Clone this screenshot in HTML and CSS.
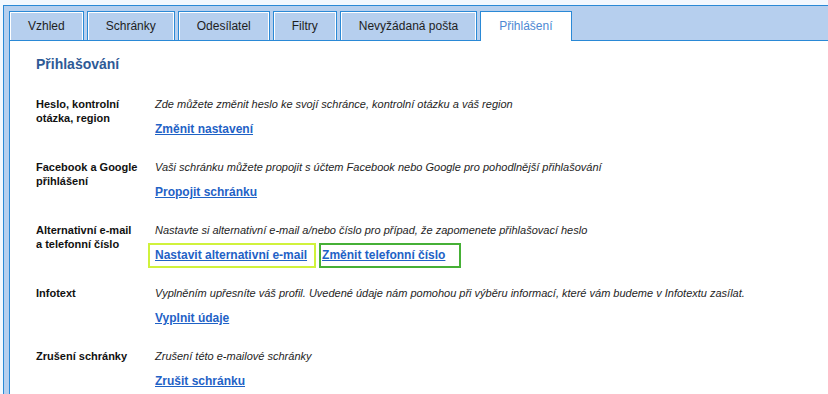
FILE: index.html
```html
<!DOCTYPE html>
<html lang="cs">
<head>
    <meta charset="UTF-8">
    <meta name="viewport" content="width=device-width, initial-scale=1.0">
    <title>Nastavení - Přihlášení</title>
    <link rel="stylesheet" href="styles.css">
</head>
<body>
    <div class="settings">
        <ul class="tabs">
            <li class="tab">Vzhled</li>
            <li class="tab">Schránky</li>
            <li class="tab">Odesílatel</li>
            <li class="tab">Filtry</li>
            <li class="tab">Nevyžádaná pošta</li>
            <li class="tab tab-active">Přihlášení</li>
        </ul>

        <div class="panel">
            <h2 class="panel-title">Přihlašování</h2>

            <div class="row">
                <div class="row-label">Heslo, kontrolní<br>otázka, region</div>
                <div class="row-body">
                    <p class="row-desc">Zde můžete změnit heslo ke svojí schránce, kontrolní otázku a váš region</p>
                    <div class="row-links"><a href="#" class="row-link">Změnit nastavení</a></div>
                </div>
            </div>

            <div class="row">
                <div class="row-label">Facebook a Google<br>přihlášení</div>
                <div class="row-body">
                    <p class="row-desc">Vaši schránku můžete propojit s účtem Facebook nebo Google pro pohodlnější přihlašování</p>
                    <div class="row-links"><a href="#" class="row-link">Propojit schránku</a></div>
                </div>
            </div>

            <div class="row">
                <div class="row-label">Alternativní e-mail<br>a telefonní číslo</div>
                <div class="row-body">
                    <p class="row-desc">Nastavte si alternativní e-mail a/nebo číslo pro případ, že zapomenete přihlašovací heslo</p>
                    <div class="row-links"><span class="mark mark-alt"><a href="#" class="row-link">Nastavit alternativní e-mail</a></span><span class="mark mark-phone"><a href="#" class="row-link">Změnit telefonní číslo</a></span></div>
                </div>
            </div>

            <div class="row">
                <div class="row-label">Infotext</div>
                <div class="row-body">
                    <p class="row-desc">Vyplněním upřesníte váš profil. Uvedené údaje nám pomohou při výběru informací, které vám budeme v Infotextu zasílat.</p>
                    <div class="row-links"><a href="#" class="row-link">Vyplnit údaje</a></div>
                </div>
            </div>

            <div class="row">
                <div class="row-label">Zrušení schránky</div>
                <div class="row-body">
                    <p class="row-desc">Zrušení této e-mailové schránky</p>
                    <div class="row-links"><a href="#" class="row-link">Zrušit schránku</a></div>
                </div>
            </div>
        </div>
    </div>
</body>
</html>
```

FILE: styles.css
```css
html, body {
    height: 100%;
}

body {
    margin: 0;
    background-color: #f3f8fe;
    font-family: "Liberation Sans", Arial, sans-serif;
    overflow: hidden;
}

.settings {
    display: flex;
    flex-direction: column;
    height: calc(100% - 6px);
    margin: 5px 0 0 3px;
    padding-left: 5px;
    background-color: #b6cfee;
    border-top: 1px solid #2a89d6;
    border-left: 1px solid #2a89d6;
}

/* Tabs */
.tabs {
    display: flex;
    align-items: flex-start;
    gap: 3px;
    list-style: none;
    margin: 0;
    padding: 5px 0 0 0;
}

.tab {
    height: 28px;
    padding: 0 18px;
    border: 1px solid #2a89d6;
    border-bottom: none;
    box-shadow: inset 1px 1px 0 #fff, inset -1px 0 0 #fff;
    background-color: #b6cfee;
    color: #1e1e1e;
    font-size: 12px;
    line-height: 28px;
    white-space: nowrap;
}

.tab-active {
    position: relative;
    z-index: 1;
    height: 29px;
    margin-bottom: -1px;
    background-color: #fff;
    box-shadow: none;
    color: #4d88d3;
}

/* Panel */
.panel {
    flex: 1;
    min-height: 0;
    overflow: hidden;
    padding: 15px 0 0 26px;
    background-color: #fff;
    border-top: 1px solid #2a89d6;
    border-left: 1px solid #2a89d6;
}

.panel-title {
    margin: 0 0 25px;
    font-size: 14px;
    line-height: 16px;
    font-weight: bold;
    color: #2e5a96;
}

.row {
    display: grid;
    grid-template-columns: 119px 1fr;
    margin-bottom: 23px;
}

.row-label {
    font-size: 11px;
    line-height: 14px;
    font-weight: bold;
    color: #111;
}

.row-desc {
    margin: 0;
    font-size: 11px;
    line-height: 14px;
    font-style: italic;
    color: #1e1e1e;
}

.row-links {
    margin-top: 11px;
    font-size: 12px;
    line-height: 15px;
    white-space: nowrap;
}

.row-link {
    font-weight: bold;
    color: #1f62c6;
    text-decoration: underline;
}

/* Highlight boxes around the contact links */
.mark {
    border: 2px solid;
    padding: 3px 7px 4px 5px;
}

.mark-alt {
    margin-left: -7px;
    border-color: #d0f23c;
}

.mark-phone {
    margin-left: 3px;
    padding: 3px 14px 4px 1px;
    border-color: #46b036;
}
```
